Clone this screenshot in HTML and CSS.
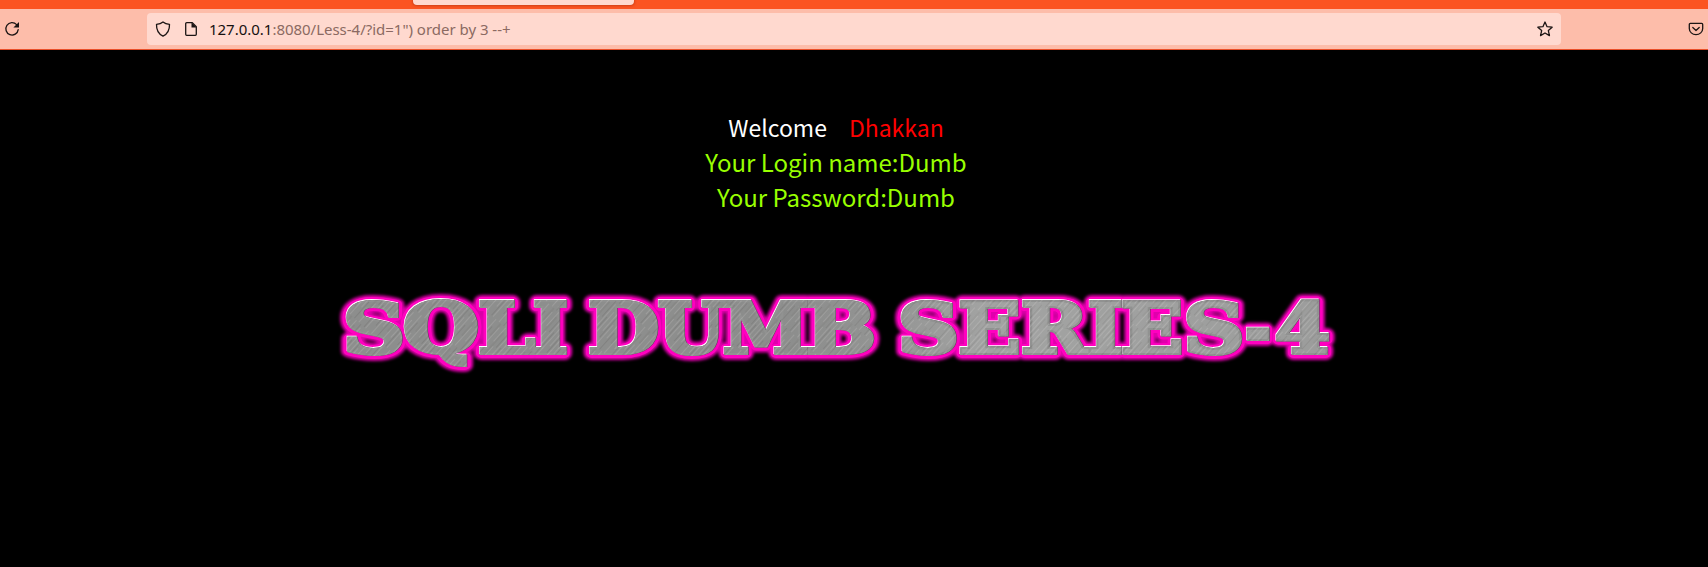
FILE: index.html
```html
<!DOCTYPE html>
<html lang="en">
<head>
<meta charset="utf-8">
<title>Less-4</title>
<link rel="stylesheet" href="styles.css">
</head>
<body>
<div class="tabs"><div class="tab"></div></div>
<div class="toolbar">
  <svg class="icon reload" viewBox="0 0 16 16"><path class="line" d="M12.6 3.6A6.2 6.2 0 1 0 14.2 8.6"/><path class="solid" d="M15 1v5.6H9.4z"/></svg>
  <div class="urlbar">
    <svg class="icon shield" viewBox="0 0 16 16"><path class="line" d="M8 .9C6 2.500 4 3 1.500 3.300C1.300 9 3 12.800 8 15.200C13 12.800 14.700 9 14.500 3.300C12 3 10 2.500 8 .9z"/></svg>
    <svg class="icon page" viewBox="0 0 16 16"><path class="line" d="M3.700 1.700h5.600l4 4v7.600a1 1 0 0 1-1 1H3.700a1 1 0 0 1-1-1V2.700a1 1 0 0 1 1-1z"/><path class="solid" d="M8.500 1.500v5h5z"/></svg>
    <div class="url"><span class="host">127.0.0.1</span><span class="path">:8080/Less-4/?id=1") order by 3 --+</span></div>
    <svg class="icon star" viewBox="0 0 16 16"><path class="line" d="M8 1l2.050 4.700 5.100.5-3.800 3.400 1.100 5L8 12l-4.450 2.600 1.100-5L.85 6.200l5.100-.5z"/></svg>
  </div>
  <svg class="icon pocket" viewBox="0 0 16 16"><path class="line" d="M2.300 2.400h11.400a1 1 0 0 1 1 1v4.100a6.700 6.200 0 0 1-13.400 0V3.400a1 1 0 0 1 1-1z"/><path class="line" d="M4.800 6.500L8 9.500l3.200-3"/></svg>
</div>
<main class="content">
  <div class="welcome"><span class="white">Welcome</span><span class="name">Dhakkan</span></div>
  <div class="info">Your Login name:Dumb</div>
  <div class="info">Your Password:Dumb</div>
  <svg class="banner" viewBox="330 280 1010 100" width="1010" height="100">
    <defs>
      <pattern id="brushed" width="29" height="47" patternUnits="userSpaceOnUse" patternTransform="rotate(42)">
        <rect width="29" height="47" fill="#919291"/>
        <path d="M1.500 0v31M5.500 20v27M9.500 4v30M14.500 0v18M17.500 22v25M22.500 3v34M26.500 10v37" stroke="#a3a3a2" stroke-width=".9"/>
        <path d="M3.500 8v30M8 0v16M11.500 25v22M16 5v30M20.500 0v21M24.500 18v29" stroke="#828280" stroke-width=".8"/>
      </pattern>
      <linearGradient id="sheen" x1="340" x2="1330" y1="300" y2="340" gradientUnits="userSpaceOnUse">
        <stop offset="0" stop-color="#000" stop-opacity=".03"/>
        <stop offset=".35" stop-color="#000" stop-opacity=".03"/>
        <stop offset=".65" stop-color="#fff" stop-opacity=".16"/>
        <stop offset="1" stop-color="#fff" stop-opacity=".1"/>
      </linearGradient>
      <filter id="soft" x="-5%" y="-30%" width="110%" height="160%"><feGaussianBlur stdDeviation="1.700"/></filter>
      <g id="title" class="title">
        <text y="352.500"><tspan x="342" textLength="62" lengthAdjust="spacingAndGlyphs">S</tspan><tspan x="402" textLength="76" lengthAdjust="spacingAndGlyphs">Q</tspan><tspan x="477" textLength="57" lengthAdjust="spacingAndGlyphs">L</tspan><tspan x="532" textLength="35" lengthAdjust="spacingAndGlyphs">I</tspan></text>
        <text y="352.500"><tspan x="587" textLength="71" lengthAdjust="spacingAndGlyphs">D</tspan><tspan x="657" textLength="67" lengthAdjust="spacingAndGlyphs">U</tspan><tspan x="722" textLength="86" lengthAdjust="spacingAndGlyphs">M</tspan><tspan x="805" textLength="70" lengthAdjust="spacingAndGlyphs">B</tspan></text>
        <text y="352.500"><tspan x="897" textLength="61" lengthAdjust="spacingAndGlyphs">S</tspan><tspan x="957.500" textLength="62" lengthAdjust="spacingAndGlyphs">E</tspan><tspan x="1020" textLength="67" lengthAdjust="spacingAndGlyphs">R</tspan><tspan x="1087" textLength="35" lengthAdjust="spacingAndGlyphs">I</tspan><tspan x="1120" textLength="62" lengthAdjust="spacingAndGlyphs">E</tspan><tspan x="1182.500" textLength="61" lengthAdjust="spacingAndGlyphs">S</tspan><tspan x="1244" textLength="26" lengthAdjust="spacingAndGlyphs">-</tspan><tspan x="1274" textLength="55" lengthAdjust="spacingAndGlyphs">4</tspan></text>
      </g>
    </defs>
    <use href="#title" class="glow" filter="url(#soft)"/>
    <use href="#title" class="outline"/>
    <use href="#title" class="highlight" x="-.6" y="-.6"/>
    <use href="#title" class="shade" x=".5" y=".5"/>
    <use href="#title" class="metal"/>
    <use href="#title" class="sheen"/>
  </svg>
</main>
</body>
</html>
```
FILE: styles.css
```css
body { margin: 0; height: 567px; overflow: hidden; background: #000; }
.tabs { height: 9px; background: #fb5421; display: flex; }
.tab { margin-left: 413px; width: 221px; height: 5px; background: #ffd9cf; border-radius: 0 0 4px 4px; box-shadow: 0 0 3px rgba(100, 20, 0, .6); }
.toolbar { box-sizing: border-box; height: 41px; background: #fdbdaa; border-bottom: 1px solid #e9502a; display: flex; align-items: center; }
.icon { flex: none; width: 16px; height: 16px; }
.line { fill: none; stroke: #1c1514; stroke-width: 1.3; stroke-linejoin: round; stroke-linecap: round; }
.solid { fill: #1c1514; }
.reload { margin-left: 4px; }
.urlbar { box-sizing: border-box; margin-left: 127px; width: 1414px; height: 32px; padding: 0 8px; background: #ffd9cf; border-radius: 4px; display: flex; align-items: center; }
.page { margin-left: 12px; }
.url { flex: 1; margin-left: 10px; font: 15px/20px "Noto Sans", sans-serif; letter-spacing: -.02px; white-space: pre; }
.host { color: #15100f; }
.path { color: #8b6a62; }
.pocket { margin-left: 127px; }
.content { display: flex; flex-direction: column; align-items: center; width: 1672px; padding-top: 60px; font: 24px/35px "Noto Sans CJK SC", sans-serif; }
.welcome { display: flex; gap: 22px; font-size: 23px; height: 34px; }
.white { color: #fff; }
.name { color: #f00; }
.info { color: #9f0; }
.banner { margin: 66px 1px 0 0; }
.title { font: bold 70px "DejaVu Serif", serif; }
.glow { fill: #e000ac; stroke: #e000ac; stroke-width: 14px; stroke-linejoin: round; }
.outline { fill: #ff00bf; stroke: #ff00bf; stroke-width: 10px; stroke-linejoin: round; }
.highlight { fill: #fff; stroke: #fff; stroke-width: 4px; stroke-miterlimit: 2; }
.shade { fill: #553b50; stroke: #553b50; stroke-width: 4px; stroke-miterlimit: 2; }
.metal { fill: url(#brushed); stroke: url(#brushed); stroke-width: 4px; stroke-miterlimit: 2; }
.sheen { fill: url(#sheen); stroke: none; }
```
